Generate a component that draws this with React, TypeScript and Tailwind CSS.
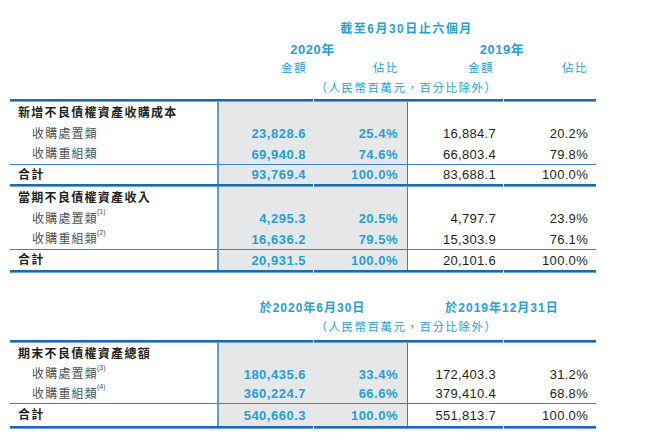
import React from "react";

const cols = "grid grid-cols-[207px_97px_94px_96px_92px]";
const blue = "text-[#239fdb]";

type RowProps = {
  label: string;
  sup?: string;
  main?: boolean;
  vals?: [string, string, string, string];
  h: string;
};

function Row({ label, sup, main, vals, h }: RowProps) {
  return (
    <div className={`${cols} ${h}`}>
      <div
        className={
          main
            ? "flex items-center pl-[8px] text-[12px] font-bold tracking-[1.3px] text-[#231f20]"
            : "flex items-center pl-[22px] text-[12px] tracking-[1.2px] text-[#505050]"
        }
      >
        {label}
        {sup && <sup className="text-[7px] tracking-normal -ml-[1px] -mt-[6px]">{sup}</sup>}
      </div>
      <div className={`flex items-center justify-end border-l-2 border-[#5b9bd0] bg-[#e6e7e9] pr-[8px] text-[13px] font-bold tracking-[0.5px] ${blue}`}>
        {vals?.[0]}
      </div>
      <div className={`flex items-center justify-end border-r border-[#3d82c0] bg-[#e6e7e9] pr-[9px] text-[13px] font-bold tracking-[0.5px] ${blue}`}>
        {vals?.[1]}
      </div>
      <div className="flex items-center justify-end pr-[8px] text-[13px] tracking-[0.3px] text-[#231f20]">
        {vals?.[2]}
      </div>
      <div className="flex items-center justify-end pr-[8px] text-[13px] tracking-[0.3px] text-[#231f20]">
        {vals?.[3]}
      </div>
    </div>
  );
}

// thick rule with small white breaks at the inner column joins
function Thick() {
  return (
    <div className={`${cols} h-[3px]`}>
      <div className="border-b border-[#6aa3d5] bg-[#1c6aac]" />
      <div className="mr-px border-b border-[#6aa3d5] bg-[#1c6aac]" />
      <div className="border-b border-[#6aa3d5] bg-[#1c6aac]" />
      <div className="mr-px border-b border-[#6aa3d5] bg-[#1c6aac]" />
      <div className="border-b border-[#6aa3d5] bg-[#1c6aac]" />
    </div>
  );
}

function Thin() {
  return (
    <div className={cols}>
      <div className="h-px bg-[#3b80bf]" />
      <div className="h-px border-l-2 border-[#5b9bd0] bg-[#3b80bf]" />
      <div className="h-px bg-[#3b80bf]" />
      <div className="h-px bg-[#3b80bf]" />
      <div className="h-px bg-[#3b80bf]" />
    </div>
  );
}

function Unit() {
  return (
    <div className={`${cols} h-[20px]`}>
      <div />
      <div className={`col-span-4 flex items-center justify-center text-[11.5px] tracking-[1.5px] ${blue}`}>
        （人民幣百萬元，百分比除外）
      </div>
    </div>
  );
}

export default function App() {
  return (
    <div className="h-[444px] w-[650px] overflow-hidden bg-white pl-[10px] pt-[19px] font-['Liberation_Sans','Noto_Sans_CJK_TC',sans-serif] leading-none">
      {/* Table 1 header */}
      <div className={`${cols} h-[20px]`}>
        <div />
        <div className={`col-span-4 flex items-center justify-center text-[12px] font-bold tracking-[1.5px] ${blue}`}>
          截至6月30日止六個月
        </div>
      </div>
      <div className={`${cols} h-[20px]`}>
        <div />
        <div className={`col-span-2 flex items-center justify-center text-[13px] font-bold tracking-[0.5px] ${blue}`}>2020年</div>
        <div className={`col-span-2 flex items-center justify-center text-[13px] font-bold tracking-[0.5px] ${blue}`}>2019年</div>
      </div>
      <div className={`${cols} h-[20px] text-[11.5px] tracking-[1.5px] ${blue}`}>
        <div />
        <div className="flex items-center justify-end pr-[7px]">金額</div>
        <div className="flex items-center justify-end pr-[9px]">佔比</div>
        <div className="flex items-center justify-end pr-[10px]">金額</div>
        <div className="flex items-center justify-end pr-[8px]">佔比</div>
      </div>
      <Unit />

      <Thick />
      <Row h="h-[21px]" main label="新增不良債權資產收購成本" />
      <Row h="h-[21px]" label="收購處置類" vals={["23,828.6", "25.4%", "16,884.7", "20.2%"]} />
      <Row h="h-[20px]" label="收購重組類" vals={["69,940.8", "74.6%", "66,803.4", "79.8%"]} />
      <Thin />
      <Row h="h-[19px]" main label="合計" vals={["93,769.4", "100.0%", "83,688.1", "100.0%"]} />
      <Thick />
      <Row h="h-[21px]" main label="當期不良債權資產收入" />
      <Row h="h-[21px]" label="收購處置類" sup="(1)" vals={["4,295.3", "20.5%", "4,797.7", "23.9%"]} />
      <Row h="h-[20px]" label="收購重組類" sup="(2)" vals={["16,636.2", "79.5%", "15,303.9", "76.1%"]} />
      <Thin />
      <Row h="h-[20px]" main label="合計" vals={["20,931.5", "100.0%", "20,101.6", "100.0%"]} />
      <Thick />

      {/* Table 2 header */}
      <div className={`${cols} mt-[25px] h-[20px]`}>
        <div />
        <div className={`col-span-2 flex items-center justify-center text-[12px] font-bold tracking-[1px] ${blue}`}>於2020年6月30日</div>
        <div className={`col-span-2 flex items-center justify-center text-[12px] font-bold tracking-[1px] ${blue}`}>於2019年12月31日</div>
      </div>
      <Unit />
      <div className="h-[2px]" />

      <Thick />
      <Row h="h-[21px]" main label="期末不良債權資產總額" />
      <Row h="h-[20px]" label="收購處置類" sup="(3)" vals={["180,435.6", "33.4%", "172,403.3", "31.2%"]} />
      <Row h="h-[19px]" label="收購重組類" sup="(4)" vals={["360,224.7", "66.6%", "379,410.4", "68.8%"]} />
      <Thin />
      <Row h="h-[22px]" main label="合計" vals={["540,660.3", "100.0%", "551,813.7", "100.0%"]} />
      <Thick />
    </div>
  );
}
